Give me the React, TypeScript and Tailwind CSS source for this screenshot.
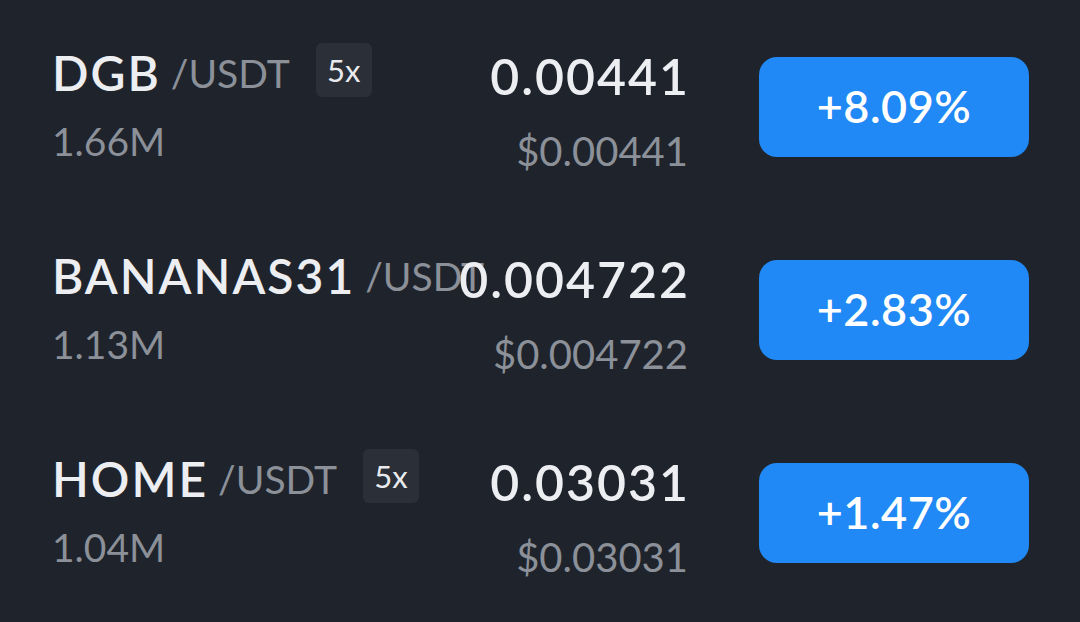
type Pair = {
  base: string;
  vol: string;
  price: string;
  usd: string;
  change: string;
  lev?: string;
};

const pairs: Pair[] = [
  { base: "DGB", vol: "1.66M", price: "0.00441", usd: "$0.00441", change: "+8.09%", lev: "5x" },
  { base: "BANANAS31", vol: "1.13M", price: "0.004722", usd: "$0.004722", change: "+2.83%" },
  { base: "HOME", vol: "1.04M", price: "0.03031", usd: "$0.03031", change: "+1.47%", lev: "5x" },
];

function Row({ p }: { p: Pair }) {
  return (
    <div className="flex items-start h-[203px] pl-[52px] pr-[51px]">
      {/* pair + volume */}
      <div className="flex-1 min-w-0 whitespace-nowrap pt-[41px]">
        <div className="flex items-center h-[54px]">
          <span className="text-[48px] leading-none font-semibold tracking-[2px] text-[#eceef2]">{p.base}</span>
          <span className="ml-[10px] text-[39px] leading-none text-[#8b9099]">/USDT</span>
          {p.lev && (
            <span className="ml-[26px] flex items-center justify-center w-[56px] h-[54px] -mt-[6px] rounded-[6px] bg-[#2a2f38] text-[31px] leading-none text-[#e8eaee]">
              {p.lev}
            </span>
          )}
        </div>
        <div className="mt-[22px] text-[39px] leading-none text-[#8b9099]">{p.vol}</div>
      </div>

      {/* last price */}
      <div className="w-[240px] shrink-0 text-right whitespace-nowrap pt-[46px]">
        <div className="-mr-[2px] text-[50px] leading-none font-semibold tracking-[2px] text-[#eceef2]">{p.price}</div>
        <div className="mt-[30px] text-[40px] leading-none text-[#8b9099]">{p.usd}</div>
      </div>

      {/* 24h change */}
      <button className="self-center shrink-0 ml-[71px] w-[270px] h-[100px] rounded-[18px] bg-[#2189f5] text-[45px] leading-none font-semibold tracking-[0.5px] text-white">
        {p.change}
      </button>
    </div>
  );
}

export default function App() {
  return (
    <div
      className="w-[1080px] h-[622px] overflow-hidden bg-[#1f242c] pt-[5px]"
      style={{ fontFamily: "Lato, 'Noto Sans', sans-serif" }}
    >
      {pairs.map((p) => (
        <Row key={p.base} p={p} />
      ))}
    </div>
  );
}
